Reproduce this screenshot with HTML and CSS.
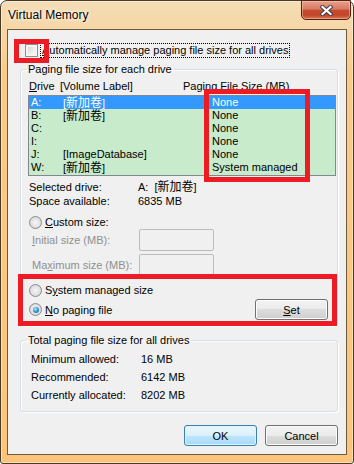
FILE: index.html
```html
<!DOCTYPE html>
<html lang="en">
<head>
    <meta charset="UTF-8">
    <title>Virtual Memory</title>
    <link rel="stylesheet" href="styles.css">
</head>
<body>

<div class="window">
    <!-- Title bar -->
    <div class="titlebar">
        <span class="title">Virtual Memory</span>
        <div class="close-btn">
            <svg width="13" height="11" viewBox="0 0 13 11">
                <path d="M2.5 2 L10.5 9 M10.5 2 L2.5 9" stroke="#3b3f4c" stroke-width="4.2" stroke-linecap="square"/>
                <path d="M2.5 2 L10.5 9 M10.5 2 L2.5 9" stroke="#ffffff" stroke-width="2.2" stroke-linecap="square"/>
            </svg>
        </div>
    </div>

    <div class="client">
        <div class="auto-row">
            <span class="checkbox"></span>
            <span class="auto-label"><u>A</u>utomatically manage paging file size for all drives</span>
        </div>

        <!-- Per drive -->
        <fieldset class="group group-drives">
            <legend>Paging file size for each drive</legend>
            <div class="list-header">
                <span class="head-drive"><u>D</u>rive</span>
                <span class="head-label">[Volume Label]</span>
                <span>Paging File Size (MB)</span>
            </div>
            <div class="listbox">
                <div class="list-row selected"><span class="cell-drive">A:</span><span class="cell-label">[<span class="cjk">新加卷</span>]</span><span>None</span></div>
                <div class="list-row"><span class="cell-drive">B:</span><span class="cell-label">[<span class="cjk">新加卷</span>]</span><span>None</span></div>
                <div class="list-row"><span class="cell-drive">C:</span><span class="cell-label"></span><span>None</span></div>
                <div class="list-row"><span class="cell-drive">I:</span><span class="cell-label"></span><span>None</span></div>
                <div class="list-row"><span class="cell-drive">J:</span><span class="cell-label">[ImageDatabase]</span><span>None</span></div>
                <div class="list-row"><span class="cell-drive">W:</span><span class="cell-label">[<span class="cjk">新加卷</span>]</span><span>System managed</span></div>
            </div>

            <div class="info-row first"><span class="info-key">Selected drive:</span><span>A:</span><span class="vol">[<span class="cjk">新加卷</span>]</span></div>
            <div class="info-row"><span class="info-key">Space available:</span><span>6835 MB</span></div>

            <div class="radio-row custom-row"><span class="radio"></span><span><u>C</u>ustom size:</span></div>
            <div class="size-row"><span class="size-key"><u>I</u>nitial size (MB):</span><span class="textbox"></span></div>
            <div class="size-row second"><span class="size-key">Ma<u>x</u>imum size (MB):</span><span class="textbox"></span></div>

            <div class="radio-row system-row"><span class="radio"></span><span>S<u>y</u>stem managed size</span></div>
            <div class="radio-row nopage-row">
                <span class="radio-item"><span class="radio checked"></span><span><u>N</u>o paging file</span></span>
                <button class="btn btn-set"><u>S</u>et</button>
            </div>
        </fieldset>

        <!-- Totals -->
        <fieldset class="group group-total">
            <legend>Total paging file size for all drives</legend>
            <div class="total-row first"><span class="total-key">Minimum allowed:</span><span>16 MB</span></div>
            <div class="total-row"><span class="total-key">Recommended:</span><span>6142 MB</span></div>
            <div class="total-row"><span class="total-key">Currently allocated:</span><span>8202 MB</span></div>
        </fieldset>

        <div class="dialog-buttons">
            <button class="btn btn-default">OK</button>
            <button class="btn">Cancel</button>
        </div>

        <!-- red annotation boxes -->
        <div class="mark mark-auto"></div>
        <div class="mark mark-size"></div>
        <div class="mark mark-mode"></div>
    </div>
</div>

</body>
</html>
```

FILE: styles.css
```css
* {
    box-sizing: border-box;
}

body {
    margin: 0;
    background-color: #ffffff;
    font-family: "Liberation Sans", Arial, sans-serif;
    font-size: 11px;
    color: #000;
}

.cjk {
    font-family: "Noto Sans CJK SC", "Liberation Sans", sans-serif;
    font-size: 12px;
    line-height: 1;
}

u {
    text-underline-offset: 1px;
}

/* window frame */
.window {
    width: 354px;
    height: 464px;
    border: 1px solid #4a3a24;
    border-radius: 7px 7px 3px 3px;
    background: linear-gradient(to bottom, #f3dcb6 0, #f6d7a7 26px, #f9cb88 70px, #fbc47a 100%);
    box-shadow: inset 0 0 0 1px rgba(255, 255, 255, 0.45);
    display: flex;
    flex-direction: column;
}

.titlebar {
    height: 28px;
    display: flex;
    justify-content: space-between;
    align-items: flex-start;
    padding-left: 7px;
    padding-right: 2px;
}

.title {
    margin-top: 7px;
    font-size: 12px;
    line-height: 14px;
    text-shadow: 0 0 6px #fff, 0 0 3px #fff;
}

.close-btn {
    width: 50px;
    height: 20px;
    margin-top: -1px;
    border: 1px solid #4e2318;
    border-radius: 0 0 5px 5px;
    background: linear-gradient(to bottom, #e8a08a 0, #d77a62 45%, #c54a2f 52%, #c4452a 78%, #de7457 100%);
    box-shadow: inset 0 0 0 1px rgba(255, 215, 195, 0.45);
    display: flex;
    align-items: center;
    justify-content: center;
}

.client {
    position: relative;
    height: 426px;
    margin: 0 6px 8px 6px;
    border: 1px solid #6d5a3c;
    background-color: #f0f0f0;
}

/* auto manage checkbox */
.auto-row {
    display: flex;
    align-items: center;
    height: 15px;
    margin-top: 13px;
}

.checkbox {
    width: 13px;
    height: 13px;
    margin-left: 17px;
    margin-right: 2px;
    border: 1px solid #8e8f8f;
    background: linear-gradient(135deg, #cdd1d6 0, #eeeeee 60%, #fbfbfb 100%);
    box-shadow: inset 0 0 0 2px #f4f4f4;
}

.auto-label {
    line-height: 13px;
    padding: 0 1px;
    border: 1px dotted #000;
}

/* group boxes */
.group {
    min-width: 0;
    margin: 0 8px 0 12px;
    padding: 0;
    border: 1px solid #d5dfe5;
    border-radius: 3px;
    box-shadow: 1px 1px 0 #ffffff, inset 1px 1px 0 #ffffff;
}

.group legend {
    margin-left: 5px;
    padding: 0 2px;
    line-height: 13px;
}

.group-drives {
    margin-top: 5px;
    padding-bottom: 5px;
}

.list-header {
    display: flex;
    height: 13px;
    line-height: 13px;
    margin: 4px 0 0 8px;
}

.head-drive {
    width: 31px;
}

.head-label {
    width: 123px;
}

.listbox {
    width: 308px;
    height: 81px;
    margin: 2px 0 0 7px;
    padding-bottom: 1px;
    border: 1px solid #828790;
    background-color: #c8ebcb;
}

.list-row {
    display: flex;
    height: 13px;
    line-height: 13px;
    padding-left: 2px;
    white-space: nowrap;
}

.list-row.selected {
    background-color: #3399ff;
    color: #fff;
}

.cell-drive {
    width: 32px;
}

.cell-label {
    width: 149px;
}

.info-row {
    display: flex;
    height: 14px;
    line-height: 14px;
    padding-left: 8px;
    white-space: nowrap;
}

.info-row.first {
    margin-top: 4px;
}

.info-key {
    width: 109px;
}

.vol {
    margin-left: 6px;
}

/* radios */
.radio-row {
    display: flex;
    align-items: center;
    height: 14px;
    padding-left: 8px;
}

.radio-item {
    display: flex;
    align-items: center;
}

.radio {
    width: 13px;
    height: 13px;
    margin-right: 3px;
    border: 1px solid #8b8b8b;
    border-radius: 50%;
    background: radial-gradient(circle at 50% 50%, #f6f6f6 0, #e2e2e2 55%, #c9c9c9 100%);
    display: flex;
    align-items: center;
    justify-content: center;
}

.radio.checked::after {
    content: "";
    width: 6px;
    height: 6px;
    border-radius: 50%;
    background: radial-gradient(circle at 40% 35%, #b5ecff 0, #3a9ee0 45%, #0f4f86 100%);
}

.custom-row {
    margin-top: 7px;
}

.size-row {
    display: flex;
    align-items: center;
    height: 22px;
    padding-left: 11px;
    color: #8f8f8f;
}

.size-row.second {
    margin-top: 3px;
}

.size-key {
    width: 107px;
}

.textbox {
    width: 75px;
    height: 22px;
    border: 1px solid #bcbcbc;
    border-radius: 2px;
    background-color: #f0f0f0;
}

.system-row {
    margin-top: 7px;
}

.nopage-row {
    height: 21px;
    margin-top: 2px;
    padding-right: 9px;
    justify-content: space-between;
}

/* totals */
.group-total {
    margin-top: 8px;
    padding-bottom: 7px;
}

.total-row {
    display: flex;
    height: 18px;
    line-height: 18px;
    padding-left: 10px;
}

.total-row.first {
    margin-top: 3px;
}

.total-key {
    width: 110px;
}

/* buttons */
.btn {
    width: 73px;
    height: 21px;
    padding: 0;
    font-family: inherit;
    font-size: 11px;
    color: #000;
    border: 1px solid #707070;
    border-radius: 3px;
    background: linear-gradient(to bottom, #f2f2f2 0, #ebebeb 50%, #dddddd 50%, #cfcfcf 100%);
    box-shadow: inset 0 0 0 1px #fcfcfc;
}

.btn-default {
    border-color: #3c7fb1;
    background: linear-gradient(to bottom, #eaf6fd 0, #d9f0fc 50%, #bee6fd 50%, #a7d9f5 100%);
    box-shadow: inset 0 0 0 1px #dff3fd;
}

.dialog-buttons {
    display: flex;
    justify-content: flex-end;
    gap: 8px;
    margin: 13px 8px 0 0;
}

/* red annotation boxes */
.mark {
    position: absolute;
    border: 5px solid #ed1c24;
}

.mark-auto {
    left: 6px;
    top: 9px;
    width: 35px;
    height: 24px;
}

.mark-size {
    left: 196px;
    top: 59px;
    width: 106px;
    height: 93px;
}

.mark-mode {
    left: 10px;
    top: 244px;
    width: 319px;
    height: 52px;
}
```
